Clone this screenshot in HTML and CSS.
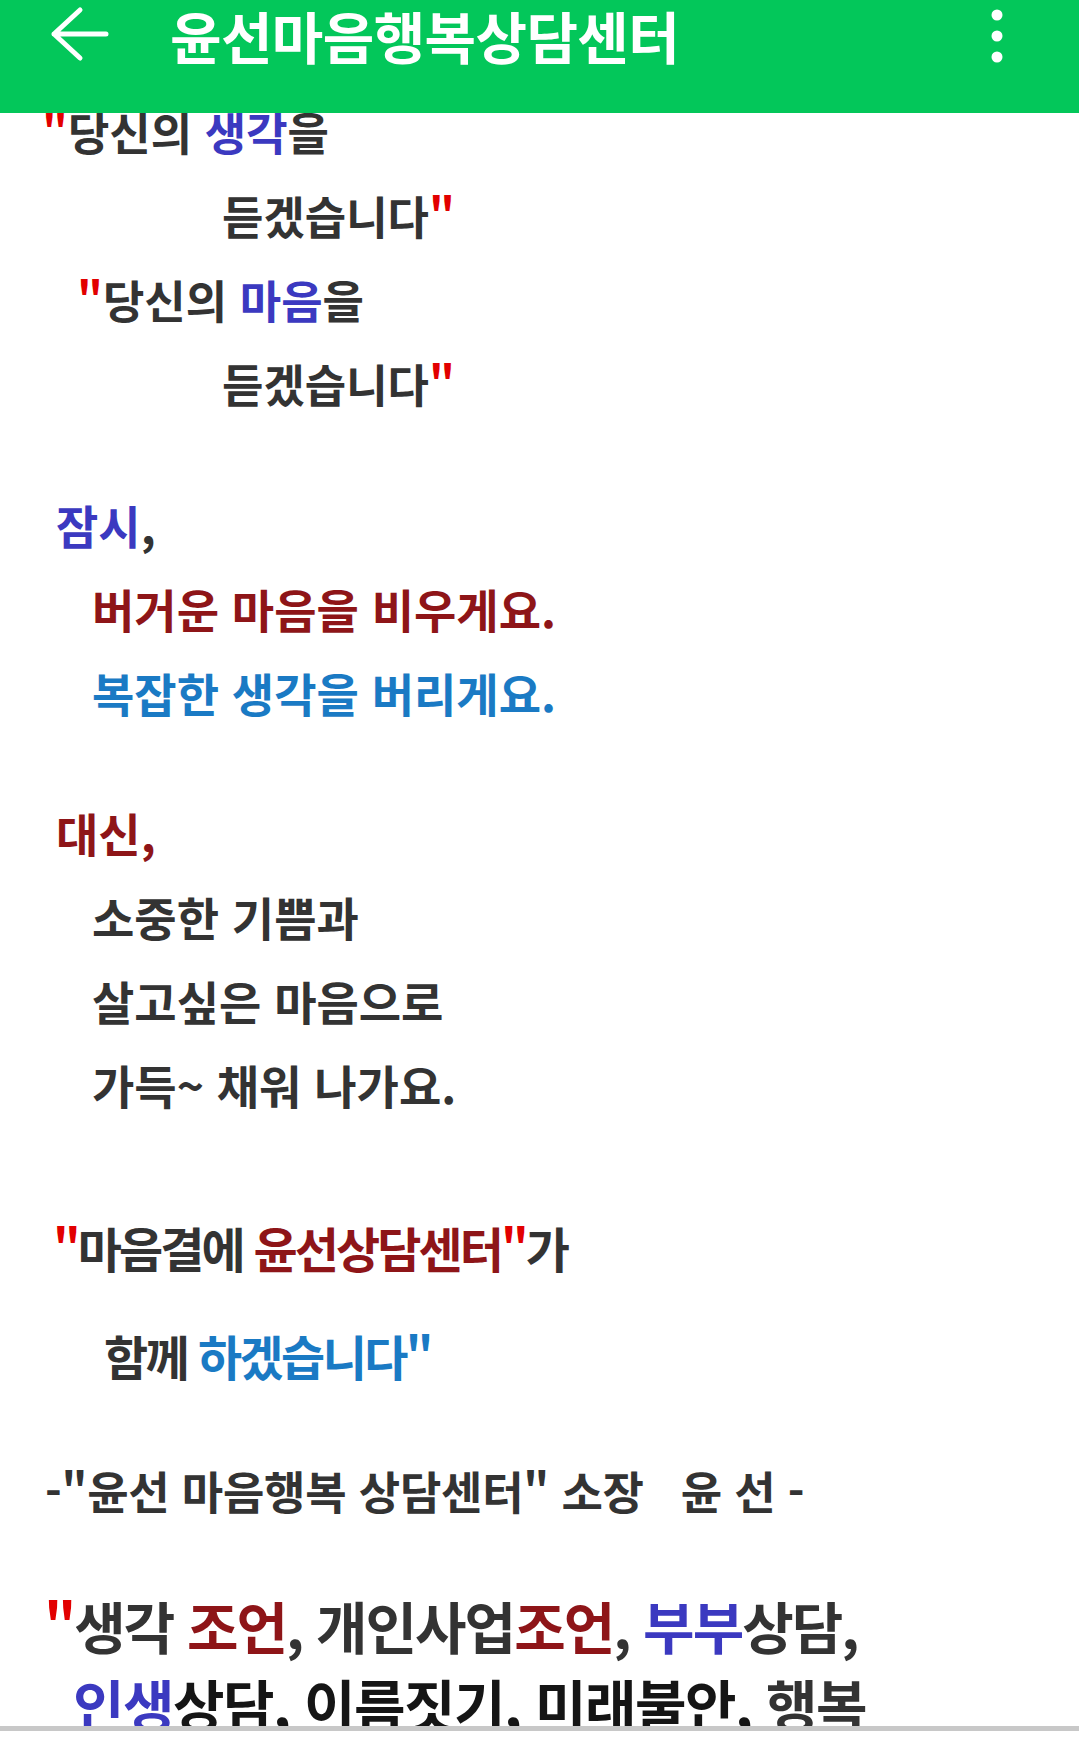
FILE: index.html
```html
<!DOCTYPE html>
<html lang="ko">
<head>
<meta charset="utf-8">
<title>윤선마음행복상담센터</title>
<link rel="stylesheet" href="styles.css">
</head>
<body>
<div class="viewport">
  <header class="appbar">
    <svg class="back" width="70" height="68" viewBox="0 0 70 68" aria-hidden="true">
      <path d="M62 34 H10 M36 10 L10 34 L36 58" fill="none" stroke="#fff" stroke-width="5" stroke-linecap="round" stroke-linejoin="round"/>
    </svg>
    <h1 class="title">윤선마음행복상담센터</h1>
    <svg class="menu" width="20" height="70" viewBox="0 0 20 70" aria-hidden="true">
      <circle cx="10" cy="15" r="5.5" fill="#fff"/>
      <circle cx="10" cy="36" r="5.5" fill="#fff"/>
      <circle cx="10" cy="57" r="5.5" fill="#fff"/>
    </svg>
  </header>
  <main class="content">
    <p class="line first l1"><span class="red">"</span>당신의 <span class="blue">생각</span>을</p>
    <p class="line first l2">듣겠습니다<span class="red">"</span></p>
    <p class="line first l3"><span class="red">"</span>당신의 <span class="blue">마음</span>을</p>
    <p class="line first l2">듣겠습니다<span class="red">"</span></p>

    <p class="line l5 gap"><span class="blue">잠시</span>,</p>
    <p class="line l6 maroon">버거운 마음을 비우게요.</p>
    <p class="line l6 sky">복잡한 생각을 버리게요.</p>

    <p class="line l5 gap maroon">대신,</p>
    <p class="line l6">소중한 기쁨과</p>
    <p class="line l6">살고싶은 마음으로</p>
    <p class="line l6">가득~ 채워 나가요.</p>

    <p class="line big l12"><span class="red">"</span>마음결에 <span class="maroon">윤선상담센터</span><span class="red">"</span>가</p>
    <p class="line big l13">함께 <span class="sky">하겠습니다"</span></p>

    <p class="line l14">-"윤선 마음행복 상담센터" 소장   윤 선 -</p>

    <p class="line large l15"><span class="red">"</span>생각 <span class="maroon">조언</span>, 개인사업<span class="maroon">조언</span>, <span class="blue">부부</span>상담,</p>
    <p class="line large l16"><span class="blue">인생</span><span class="ink">상담, 이름짓기, 미래불안,</span> 행복</p>
  </main>
</div>
<div class="divider"></div>
<div class="footer"></div>
</body>
</html>
```
FILE: styles.css
```css
html, body {
  margin: 0;
  padding: 0;
  background: #ffffff;
}

body {
  width: 1079px;
  height: 1755px;
  overflow: hidden;
  font-family: "Noto Sans CJK KR", "Noto Sans", sans-serif;
  color: #333333;
}

.viewport {
  position: relative;
  height: 1726px;
  overflow: hidden;
}

.appbar {
  position: absolute;
  top: 0;
  left: 0;
  right: 0;
  height: 113px;
  background: #03c75a;
  display: flex;
  align-items: flex-start;
  padding-left: 44px;
  box-sizing: border-box;
  z-index: 2;
}

.back {
  display: block;
  flex: none;
}

.title {
  margin: -5px 0 0 56px;
  font-size: 56px;
  line-height: 80px;
  font-weight: 700;
  letter-spacing: -0.6px;
  color: #ffffff;
  white-space: nowrap;
}

.menu {
  display: block;
  margin-left: auto;
  margin-right: 72px;
  flex: none;
}

.content {
  padding-top: 90px;
}

.line {
  margin: 0;
  font-size: 46px;
  line-height: 84px;
  height: 84px;
  font-weight: 700;
  white-space: pre;
}

.first { font-size: 45px; }

.l1 { margin-left: 42px; }
.l2 { margin-left: 222px; }
.l3 { margin-left: 77px; }
.l5 { margin-left: 56px; }
.l6 { margin-left: 92px; }
.gap { margin-top: 56px; }

.big {
  font-size: 48px;
  letter-spacing: -2.9px;
}
.l12 { margin-left: 53px; margin-top: 79px; }
.l13 { margin-left: 104px; margin-top: 24px; letter-spacing: -2.6px; }

.l14 { margin-left: 45px; margin-top: 52px; font-size: 45px; letter-spacing: -0.25px; }

.large {
  font-size: 56px;
  line-height: 78px;
  height: 78px;
  letter-spacing: -2px;
}
.l15 { margin-left: 44px; margin-top: 53px; }
.l16 { margin-left: 73px; letter-spacing: -1.5px; }

.red { color: #e20000; }
.blue { color: #3b39c0; }
.maroon { color: #8e1518; }
.sky { color: #1a7ac4; }
.ink { color: #151515; }

.divider {
  height: 5px;
  background: #c8c8c8;
}

.footer {
  height: 24px;
  background: #ffffff;
}
```
